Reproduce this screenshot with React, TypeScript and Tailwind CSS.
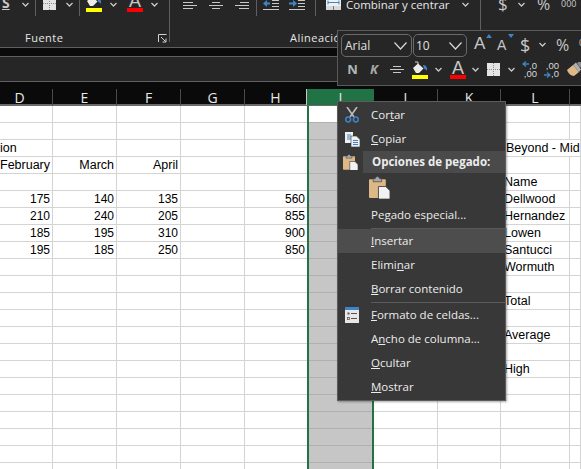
const Chevron = ({ className = '' }: { className?: string }) => (
  <svg className={`flex-none ${className}`} width="7" height="5" viewBox="0 0 7 5" fill="none">
    <path d="M0.5 1 L3.5 4 L6.5 1" stroke="#c8c8c8" strokeWidth="1.3" />
  </svg>
)

const BigChevron = ({ className = '' }: { className?: string }) => (
  <svg className={`flex-none ${className}`} width="13" height="8" viewBox="0 0 13 8" fill="none">
    <path d="M0.5 0.5 L6.5 7 L12.5 0.5" stroke="#d8d8d8" strokeWidth="1.2" />
  </svg>
)

const Sep = ({ className = '' }: { className?: string }) => (
  <div className={`w-px flex-none bg-[#5f5f5f] ${className}`} />
)

const AlignLines = ({ kind, className = '' }: { kind: 'left' | 'center' | 'right'; className?: string }) => {
  const x = { left: [0, 0, 0], center: [3, 0, 3], right: [5, 0, 4] }[kind]
  const w = { left: [10, 14, 10], center: [8, 14, 8], right: [9, 14, 10] }[kind]
  return (
    <svg className={`flex-none ${className}`} width="14" height="9" viewBox="0 0 14 9">
      {[0, 3, 6].map((y, i) => (
        <rect key={y} x={x[i]} y={y + 1} width={w[i]} height="1" fill="#c8c8c8" />
      ))}
    </svg>
  )
}

const Indent = ({ flip = false, className = '' }: { flip?: boolean; className?: string }) => (
  <svg className={`flex-none ${className}`} width="16" height="11" viewBox="0 0 16 11">
    <rect x="9" y="0" width="7" height="1" fill="#c8c8c8" />
    <rect x="9" y="3" width="7" height="1" fill="#c8c8c8" />
    <rect x="9" y="6" width="7" height="1" fill="#c8c8c8" />
    <rect x="0" y="9" width="16" height="1" fill="#c8c8c8" />
    {flip ? (
      <path d="M0 2.5 H4 V0 L8 3.5 L4 7 V4.5 H0 Z" fill="#3d85c6" />
    ) : (
      <path d="M7 2.5 H4 V0 L0 3.5 L4 7 V4.5 H7 Z" fill="#3d85c6" />
    )}
  </svg>
)

const BorderIcon = ({ className = '' }: { className?: string }) => (
  <svg className={`flex-none ${className}`} width="13" height="13" viewBox="0 0 13 13">
    <rect width="13" height="13" fill="#e4e4e4" />
    <path d="M6.5 0 V13 M0 6.5 H13" stroke="#8a8a8a" strokeWidth="1" strokeDasharray="1 1" />
  </svg>
)

const Bucket = ({ className = '' }: { className?: string }) => (
  <svg className={`flex-none ${className}`} width="16" height="18" viewBox="0 0 16 18">
    <path d="M3 1 H6 V3" stroke="#d0d0d0" fill="none" />
    <path d="M1 7 L6 2.5 L11.5 7.5 L7 12 H4 Z" fill="#ececec" />
    <path d="M11 4 C14 4 15.5 6 15 10 C14 8.5 13 8 12 7.5 Z" fill="#3d85c6" />
    <rect x="0" y="14" width="16" height="4" fill="#ffff00" />
  </svg>
)

const LetterA = ({ className = '' }: { className?: string }) => (
  <div className={`flex w-4 flex-none flex-col items-center ${className}`}>
    <span className="font-['Liberation_Sans',sans-serif] text-[18px] leading-[14px] text-[#c8c8c8]">A</span>
    <div className="h-1 w-4 bg-[#ff0000]" />
  </div>
)

const FontGrow = ({ down = false, small = false, className = '' }: { down?: boolean; small?: boolean; className?: string }) => (
  <div className={`relative flex-none ${small ? 'w-[13px] pt-[4px]' : 'w-[14px] pt-[2px]'} ${className}`}>
    <span className={`block font-['Liberation_Sans',sans-serif] text-[#c8c8c8] ${small ? 'text-[14px] leading-[14px]' : 'text-[17px] leading-[16px]'}`}>A</span>
    <svg className="absolute right-[-4px] top-0" width="6" height="4" viewBox="0 0 6 4">
      <path d={down ? 'M0 0 H6 L3 4 Z' : 'M0 4 H6 L3 0 Z'} fill="#3d85c6" />
    </svg>
  </div>
)

const Merge = ({ className = '' }: { className?: string }) => (
  <svg className={`flex-none ${className}`} width="15" height="11" viewBox="0 0 15 11">
    <rect width="15" height="7" fill="#f0f0f0" />
    <rect y="7" width="15" height="4" fill="#d8d8d8" />
    <path d="M2 3.5 H13 M2 1.5 V5.5 M13 1.5 V5.5" stroke="#3d85c6" strokeWidth="1" />
    <path d="M7.5 7 V11" stroke="#777" />
  </svg>
)

const Scissors = () => (
  <svg width="14" height="16" viewBox="0 0 14 16" fill="none">
    <path d="M2 0 L9 10 M12 0 L5 10" stroke="#bdbdbd" strokeWidth="1.6" />
    <circle cx="3.2" cy="12.5" r="2.4" stroke="#3d85c6" strokeWidth="1.5" />
    <circle cx="10.8" cy="12.5" r="2.4" stroke="#3d85c6" strokeWidth="1.5" />
  </svg>
)

const CopyIcon = () => (
  <svg width="15" height="15" viewBox="0 0 15 15">
    <rect x="0" y="0" width="8" height="11" fill="#f0f0f0" />
    <path d="M2 3 H6 M2 5 H6 M2 7 H6" stroke="#3d85c6" />
    <path d="M6 4 H11.5 L15 7.5 V15 H6 Z" fill="#f0f0f0" stroke="#383838" strokeWidth="0.6" />
    <path d="M8 8.5 H13 M8 10.5 H13 M8 12.5 H13" stroke="#3d85c6" />
  </svg>
)

const PasteIcon = ({ size }: { size: number }) => (
  <svg width={size} height={size * 1.1} viewBox="0 0 20 22">
    <rect x="0" y="3" width="16" height="18" rx="1" fill="#deb887" />
    <path d="M4 4 V2.5 H6 A2 2 0 0 1 10 2.5 H12 V5.5 H4 Z" fill="#a8a8a8" stroke="#383838" strokeWidth="0.6" />
    <path d="M9 10 H16 L20 14 V22 H9 Z" fill="#f2f2f2" stroke="#383838" strokeWidth="0.8" />
  </svg>
)

const FormatCells = () => (
  <svg width="14" height="16" viewBox="0 0 14 16">
    <rect width="14" height="16" fill="#e8e8e8" />
    <rect width="14" height="3" fill="#3d85c6" />
    <rect x="2.5" y="5.5" width="2" height="2" fill="#555" />
    <rect x="6" y="6" width="6" height="1" fill="#555" />
    <rect x="2.5" y="10.5" width="2" height="2" fill="none" stroke="#555" strokeWidth="0.8" />
    <rect x="6" y="11" width="6" height="1" fill="#555" />
  </svg>
)

const Decimal = ({ more = false, className = '' }: { more?: boolean; className?: string }) => (
  <div className={`relative h-[17px] w-[15px] flex-none font-['Liberation_Sans',sans-serif] text-[9.5px] leading-[9px] text-[#d8d8d8] ${className}`}>
    <span className="absolute right-0 top-0">{more ? ',00' : ',0'}</span>
    <span className="absolute bottom-0 right-0">{more ? ',0' : ',00'}</span>
    <svg className={`absolute left-0 ${more ? 'bottom-0' : 'top-0'}`} width="7" height="6" viewBox="0 0 7 6">
      {more ? <path d="M0 3 H5 M3 0.5 L6 3 L3 5.5" stroke="#3d85c6" fill="none" strokeWidth="1.3" /> : <path d="M7 3 H2 M4 0.5 L1 3 L4 5.5" stroke="#3d85c6" fill="none" strokeWidth="1.3" />}
    </svg>
  </div>
)

const Brush = ({ className = '' }: { className?: string }) => (
  <svg className={`flex-none ${className}`} width="16" height="15" viewBox="0 0 16 15">
    <path d="M0 8 L6 3 L12 10 L7 14 C4 14 1 11 0 8 Z" fill="#deb887" />
    <path d="M6 3 L9 0.5 L14 7.5 L12 10 Z" fill="#b0b0b0" />
    <path d="M10 1 L13 -1 L16 2 L13 6 Z" fill="#8a8a8a" />
  </svg>
)

const Ribbon = () => (
  <div className="h-[47px] flex-none overflow-hidden bg-[#262626] font-['Open_Sans',sans-serif] text-[#e6e6e6]">
    <div className="flex h-[42px] items-start">
      <span className="ml-[2px] mt-[-6px] w-[9px] flex-none text-[14px] font-bold leading-[18px] text-[#c8c8c8] underline">S</span>
      <Chevron className="ml-[11px] mt-[2px]" />
      <Sep className="ml-[6px] h-[16px]" />
      <BorderIcon className="ml-[7px] mt-[-3px]" />
      <Chevron className="ml-[10px] mt-[2px]" />
      <Sep className="ml-[6px] h-[16px]" />
      <Bucket className="ml-[6px] mt-[-6px]" />
      <Chevron className="ml-[8px] mt-[2px]" />
      <LetterA className="ml-[10px] mt-[-6px]" />
      <Chevron className="ml-[8px] mt-[2px]" />
      <Sep className="ml-[11px] h-[42px]" />
      <AlignLines kind="left" className="ml-[13px] mt-px" />
      <AlignLines kind="center" className="ml-[12px] mt-px" />
      <AlignLines kind="right" className="ml-[12px] mt-px" />
      <Sep className="ml-[7px] h-[16px]" />
      <Indent className="ml-[6px]" />
      <Indent flip className="ml-[10px]" />
      <Sep className="ml-[10px] h-[16px]" />
      <Merge className="ml-[10px] mt-[-1px]" />
      <span className="ml-[5px] mt-[-4px] w-[102px] flex-none whitespace-nowrap text-[11.5px] leading-[18px]">Combinar y centrar</span>
      <Chevron className="ml-[14px] mt-[2px]" />
      <Sep className="ml-[11px] h-[30px]" />
      <span className="ml-[17px] mt-[-5px] w-[9px] flex-none text-[17px] leading-[18px] text-[#c8c8c8]">$</span>
      <Chevron className="ml-[11px] mt-[2px]" />
      <span className="ml-[12px] mt-[-5px] w-[13px] flex-none text-[16px] leading-[18px] text-[#c8c8c8]">%</span>
      <span className="ml-[11px] mt-[-2px] flex-none text-[9px] leading-[12px] text-[#c8c8c8]">000</span>
    </div>
  </div>
)

const RibbonLabels = () => (
  <div className="absolute left-0 top-[29px] flex h-[19px] w-[340px] items-center font-['Open_Sans',sans-serif] text-[11px] tracking-[0.5px] text-[#e6e6e6]">
    <span className="ml-[25px] w-[40px] flex-none">Fuente</span>
    <svg className="ml-[93px] flex-none" width="9" height="9" viewBox="0 0 9 9" fill="none">
      <path d="M0.5 8 V0.5 H8.5 M3 3 L8 8 M8 4.5 V8 H4.5" stroke="#d0d0d0" />
    </svg>
    <span className="ml-[123px] whitespace-nowrap">Alineació</span>
  </div>
)

const MiniToolbar = () => (
  <div className="absolute left-[337px] top-[30px] flex h-[56px] w-[244px] flex-col border border-r-0 border-[#5a5a5a] bg-[#262626] font-['Open_Sans',sans-serif] text-[#e0e0e0]">
    <div className="flex h-[27px] flex-none items-start overflow-hidden pt-[3px]">
      <div className="ml-[3px] flex h-[23px] w-[71px] flex-none items-center rounded-[5px] border border-[#6a6a6a] pl-[3px] text-[12px]">
        Arial
        <BigChevron className="ml-auto mr-[4px]" />
      </div>
      <div className="ml-px flex h-[23px] w-[54px] flex-none items-center rounded-[5px] border border-[#6a6a6a] pl-[2px] text-[12px]">
        10
        <BigChevron className="ml-auto mr-[4px]" />
      </div>
      <FontGrow className="ml-[7px]" />
      <FontGrow down small className="ml-[9px]" />
      <span className="ml-[10px] mt-[1px] w-[9px] flex-none text-[18px] leading-[20px] text-[#c8c8c8]">$</span>
      <Chevron className="ml-[10px] mt-[8px]" />
      <span className="ml-[10px] mt-[1px] w-[13px] flex-none text-[16px] leading-[20px] text-[#c8c8c8]">%</span>
      <span className="ml-[10px] mt-[3px] flex-none text-[9px] leading-[12px] text-[#c8c8c8]">000</span>
    </div>
    <div className="flex flex-1 items-center overflow-hidden pb-[4px]">
      <span className="ml-[9px] w-[11px] flex-none text-center text-[13px] font-bold leading-none text-[#b4b4b4]">N</span>
      <span className="ml-[11px] w-[10px] flex-none text-center text-[13px] font-bold italic leading-none text-[#a8a8a8]">K</span>
      <AlignLines kind="center" className="ml-[11px]" />
      <Bucket className="ml-[8px]" />
      <Chevron className="ml-[7px]" />
      <LetterA className="ml-[8px]" />
      <Chevron className="ml-[6px]" />
      <BorderIcon className="ml-[8px]" />
      <Chevron className="ml-[8px]" />
      <Decimal className="ml-[7px]" />
      <Decimal more className="ml-[7px]" />
      <Brush className="ml-[8px]" />
    </div>
  </div>
)

const Item = ({ icon, children, hover = false }: { icon?: React.ReactNode; children: React.ReactNode; hover?: boolean }) => (
  <div className={`flex h-6 flex-none items-center ${hover ? 'bg-[#4d4d4d]' : ''}`}>
    <div className="flex w-[33px] flex-none justify-center pr-[5px]">{icon}</div>
    <span className="whitespace-nowrap">{children}</span>
  </div>
)

const MenuSep = () => (
  <div className="flex h-[2px] flex-none items-center pl-[33px]">
    <div className="h-px w-full bg-[#5a5a5a]" />
  </div>
)

const ContextMenu = () => (
  <div className="absolute left-[337px] top-[101px] flex h-[300px] w-[169px] flex-col border border-[#5c5c5c] bg-[#383838] pt-px font-['Open_Sans',sans-serif] text-[11.5px] text-[#ececec] shadow-[1px_1px_2px_rgba(0,0,0,0.35)]">
    <Item icon={<Scissors />}>Cor<u>t</u>ar</Item>
    <Item icon={<CopyIcon />}><u>C</u>opiar</Item>
    <div className="flex h-[22px] flex-none items-center">
      <div className="flex w-[25px] flex-none justify-center pl-[2px] pr-[3px]">
        <PasteIcon size={15} />
      </div>
      <div className="flex h-full flex-1 items-center bg-[#4a4a4a] pl-[9px] font-bold">Opciones de pegado:</div>
    </div>
    <div className="flex h-[30px] flex-none items-center pl-[31px]">
      <PasteIcon size={21} />
    </div>
    <Item>Pe<u>g</u>ado especial...</Item>
    <MenuSep />
    <Item hover><u>I</u>nsertar</Item>
    <Item>Elimi<u>n</u>ar</Item>
    <Item><u>B</u>orrar contenido</Item>
    <MenuSep />
    <Item icon={<FormatCells />}><u>F</u>ormato de celdas...</Item>
    <Item>A<u>n</u>cho de columna...</Item>
    <Item><u>O</u>cultar</Item>
    <Item><u>M</u>ostrar</Item>
  </div>
)

const cols = ['D', 'E', 'F', 'G', 'H', 'I', 'J', 'K', 'L', 'M']
const template = 'grid grid-cols-[53px_64px_64px_64px_62px_67px_64px_63px_69px_11px]'

// texto por fila (indice desde la fila 105px)
const rows: Record<number, Record<string, string>> = {
  2: { D: 'ion', L: 'Beyond - Mid' },
  3: { D: 'February', E: 'March', F: 'April' },
  4: { L: 'Name' },
  5: { D: '175', E: '140', F: '135', H: '560', L: 'Dellwood' },
  6: { D: '210', E: '240', F: '205', H: '855', L: 'Hernandez' },
  7: { D: '185', E: '195', F: '310', H: '900', L: 'Lowen' },
  8: { D: '195', E: '185', F: '250', H: '850', L: 'Santucci' },
  9: { L: 'Wormuth' },
  11: { L: 'Total' },
  13: { L: 'Average' },
  15: { L: 'High' },
}

const Sheet = () => (
  <div className="flex-1 overflow-hidden bg-white font-['Liberation_Sans',sans-serif] text-black">
    {Array.from({ length: 22 }, (_, r) => (
      <div key={r} className={template}>
        {cols.map((c) => {
          const text = rows[r]?.[c]
          if (c === 'I') {
            return (
              <div key={c} className={`h-[17px] border-x-2 border-[#217346] ${r === 0 ? 'bg-white' : 'bg-[#c6c6c6]'}`}>
                <div className="h-full border-b border-[#b0b0b0]" />
              </div>
            )
          }
          const isLeft = c === 'L' || (c === 'D' && r === 2)
          const isNumber = text != null && /^\d+$/.test(text)
          return (
            <div
              key={c}
              className={`h-[17px] whitespace-nowrap border-b border-r border-[#d4d4d4] leading-[16px] ${
                isNumber ? 'text-[12px]' : 'text-[12.5px]'
              } ${isLeft ? 'text-left' : 'pr-[2px] text-right'} ${
                c === 'L' ? (r === 2 ? 'border-r-0 pl-[5px]' : 'pl-[3px]') : ''
              } ${c === 'H' ? 'border-r-0' : ''}`}
            >
              {text}
            </div>
          )
        })}
      </div>
    ))}
  </div>
)

const ColumnHeaders = () => (
  <div className="h-[24px] flex-none border-b-2 border-[#6a6a6a] bg-[#0a0a0a] pt-[7px] font-['Open_Sans',sans-serif] text-[14px] text-[#e8e8e8]">
    <div className={template}>
      {cols.map((c) => (
        <div
          key={c}
          className={`flex h-[16px] items-center justify-center ${
            c === 'I' ? 'bg-[#217346]' : c === 'H' || c === 'M' ? '' : 'border-r border-[#4a4a4a]'
          } ${c === 'H' ? 'border-r border-[#c8c8c8]' : ''} ${c === 'D' ? 'pr-[13px]' : ''}`}
        >
          {c === 'M' ? '' : c}
        </div>
      ))}
    </div>
  </div>
)

export default function App() {
  return (
    <div className="relative flex h-[469px] w-[581px] flex-col overflow-hidden bg-white">
      <Ribbon />
      <RibbonLabels />
      <div className="h-[10px] flex-none border-y border-[#5f5f5f] bg-[#0a0a0a]" />
      <div className="h-[24px] flex-none bg-[#262626]" />
      <div className="h-px flex-none bg-[#5f5f5f]" />
      <ColumnHeaders />
      <Sheet />
      <MiniToolbar />
      <ContextMenu />
    </div>
  )
}
